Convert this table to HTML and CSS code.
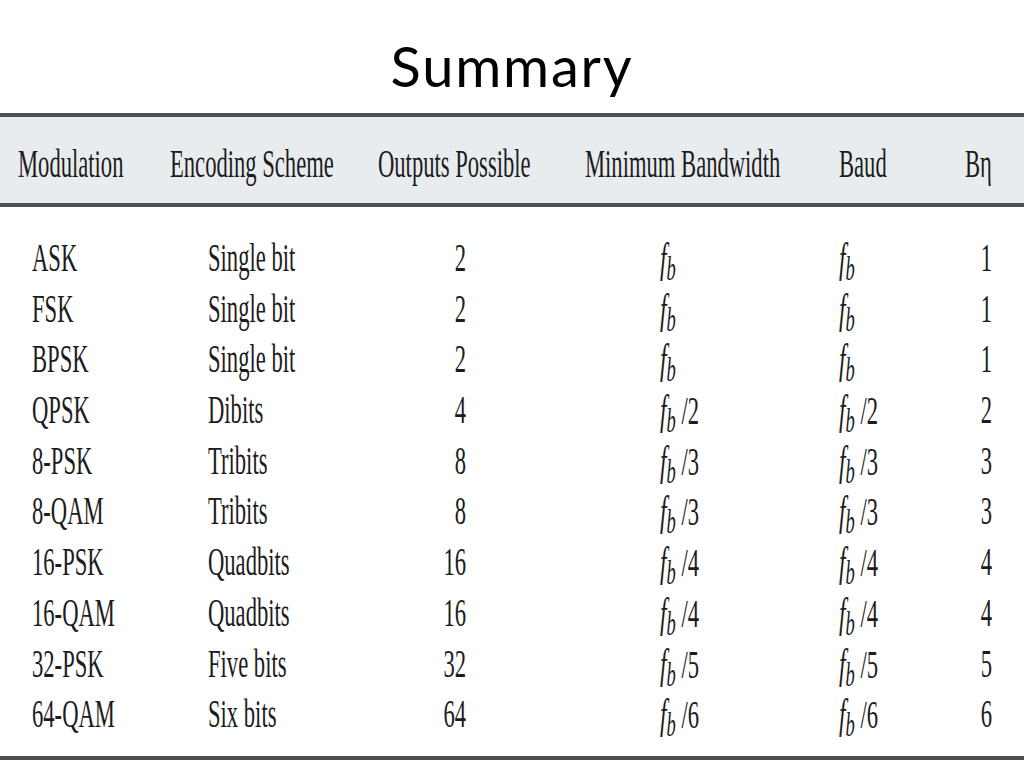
FILE: index.html
```html
<!DOCTYPE html>
<html lang="en">
<head>
<meta charset="utf-8">
<title>Summary</title>
<link rel="stylesheet" href="styles.css">
</head>
<body>
<h1 class="title">Summary</h1>
<div class="tbl">
  <div class="thead">
    <div class="cell"><span>Modulation</span></div>
    <div class="cell"><span>Encoding Scheme</span></div>
    <div class="cell"><span>Outputs Possible</span></div>
    <div class="cell"><span>Minimum Bandwidth</span></div>
    <div class="cell"><span>Baud</span></div>
    <div class="cell"><span>Bη</span></div>
  </div>
  <div class="tbody">
    <div class="cell"><span>ASK</span></div><div class="cell"><span>Single bit</span></div><div class="cell"><span>2</span></div><div class="cell"><span><i>f</i><sub>b</sub></span></div><div class="cell"><span><i>f</i><sub>b</sub></span></div><div class="cell"><span>1</span></div>
    <div class="cell"><span>FSK</span></div><div class="cell"><span>Single bit</span></div><div class="cell"><span>2</span></div><div class="cell"><span><i>f</i><sub>b</sub></span></div><div class="cell"><span><i>f</i><sub>b</sub></span></div><div class="cell"><span>1</span></div>
    <div class="cell"><span>BPSK</span></div><div class="cell"><span>Single bit</span></div><div class="cell"><span>2</span></div><div class="cell"><span><i>f</i><sub>b</sub></span></div><div class="cell"><span><i>f</i><sub>b</sub></span></div><div class="cell"><span>1</span></div>
    <div class="cell"><span>QPSK</span></div><div class="cell"><span>Dibits</span></div><div class="cell"><span>4</span></div><div class="cell"><span><i>f</i><sub>b</sub> /2</span></div><div class="cell"><span><i>f</i><sub>b</sub> /2</span></div><div class="cell"><span>2</span></div>
    <div class="cell"><span>8-PSK</span></div><div class="cell"><span>Tribits</span></div><div class="cell"><span>8</span></div><div class="cell"><span><i>f</i><sub>b</sub> /3</span></div><div class="cell"><span><i>f</i><sub>b</sub> /3</span></div><div class="cell"><span>3</span></div>
    <div class="cell"><span>8-QAM</span></div><div class="cell"><span>Tribits</span></div><div class="cell"><span>8</span></div><div class="cell"><span><i>f</i><sub>b</sub> /3</span></div><div class="cell"><span><i>f</i><sub>b</sub> /3</span></div><div class="cell"><span>3</span></div>
    <div class="cell"><span>16-PSK</span></div><div class="cell"><span>Quadbits</span></div><div class="cell"><span>16</span></div><div class="cell"><span><i>f</i><sub>b</sub> /4</span></div><div class="cell"><span><i>f</i><sub>b</sub> /4</span></div><div class="cell"><span>4</span></div>
    <div class="cell"><span>16-QAM</span></div><div class="cell"><span>Quadbits</span></div><div class="cell"><span>16</span></div><div class="cell"><span><i>f</i><sub>b</sub> /4</span></div><div class="cell"><span><i>f</i><sub>b</sub> /4</span></div><div class="cell"><span>4</span></div>
    <div class="cell"><span>32-PSK</span></div><div class="cell"><span>Five bits</span></div><div class="cell"><span>32</span></div><div class="cell"><span><i>f</i><sub>b</sub> /5</span></div><div class="cell"><span><i>f</i><sub>b</sub> /5</span></div><div class="cell"><span>5</span></div>
    <div class="cell"><span>64-QAM</span></div><div class="cell"><span>Six bits</span></div><div class="cell"><span>64</span></div><div class="cell"><span><i>f</i><sub>b</sub> /6</span></div><div class="cell"><span><i>f</i><sub>b</sub> /6</span></div><div class="cell"><span>6</span></div>
  </div>
</div>
</body>
</html>
```
FILE: styles.css
```css
* { box-sizing: border-box; }
html, body { margin: 0; padding: 0; background: #ffffff; }
body { width: 1024px; height: 768px; overflow: hidden; }

.title {
  margin: 0;
  height: 113px;
  padding-top: 38px;
  font-family: Lato, "Open Sans", sans-serif;
  font-weight: 400;
  font-size: 56px;
  line-height: 56px;
  letter-spacing: 1.8px;
  color: #000;
  text-align: center;
}

.tbl {
  font-family: "Liberation Serif", "Times New Roman", serif;
  font-size: 40px;
  color: #1c1c1c;
}

.thead, .tbody {
  display: grid;
  grid-template-columns: 170px 208px 207px 254px 126px 59px;
}

.thead {
  height: 94px;
  padding-top: 22px;
  background: #e9ecef;
  border-top: 4px solid #4f4f4f;
  border-bottom: 4px solid #4f4f4f;
  line-height: 50px;
}

.tbody {
  grid-auto-rows: 50.7px;
  padding: 26px 0 16px;
  border-bottom: 4px solid #4f4f4f;
  line-height: 50.7px;
}

.cell {
  display: flex;
  white-space: nowrap;
}

.cell span {
  display: inline-block;
  transform: scaleX(0.565);
  transform-origin: left center;
}

.cell i {
  font-size: 1.05em;
}

.cell sub {
  font-style: italic;
  font-size: 0.82em;
  line-height: 0;
  vertical-align: -0.25em;
}

.thead .cell:first-child { padding-left: 18px; }

.tbody .cell:nth-child(6n+1) { padding-left: 32px; }
.tbody .cell:nth-child(6n+2) { padding-left: 38px; }
.tbody .cell:nth-child(6n+3) { justify-content: flex-end; padding-right: 119px; }
.tbody .cell:nth-child(6n+4) { padding-left: 75px; }
.tbody .cell:nth-child(6n+5) { padding-left: 0; }
.tbody .cell:nth-child(6n) { justify-content: flex-end; padding-right: 32px; }

.tbody .cell:nth-child(6n+3) span,
.tbody .cell:nth-child(6n) span { transform-origin: right center; }
```
